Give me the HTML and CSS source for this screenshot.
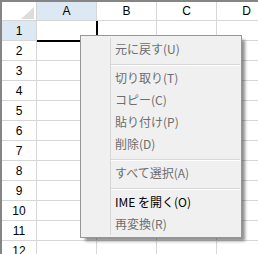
FILE: index.html
```html
<!DOCTYPE html>
<html lang="ja">
<head>
  <meta charset="UTF-8" />
  <title>Sheet context menu</title>
  <link rel="stylesheet" href="styles.css">
</head>
<body>
  <!-- Grid -->
  <div class="sheet">
    <div class="cell corner">
      <svg width="13" height="12" viewBox="0 0 13 12"><polygon points="13,0 13,12 0,12" fill="#dcdcdc"/></svg>
    </div>
    <div class="cell head sel">A</div>
    <div class="cell head">B</div>
    <div class="cell head">C</div>
    <div class="cell head">D</div>

    <div class="cell rowhead sel">1</div><div class="cell"></div><div class="cell"></div><div class="cell"></div><div class="cell"></div>
    <div class="cell rowhead">2</div><div class="cell"></div><div class="cell"></div><div class="cell"></div><div class="cell"></div>
    <div class="cell rowhead">3</div><div class="cell"></div><div class="cell"></div><div class="cell"></div><div class="cell"></div>
    <div class="cell rowhead">4</div><div class="cell"></div><div class="cell"></div><div class="cell"></div><div class="cell"></div>
    <div class="cell rowhead">5</div><div class="cell"></div><div class="cell"></div><div class="cell"></div><div class="cell"></div>
    <div class="cell rowhead">6</div><div class="cell"></div><div class="cell"></div><div class="cell"></div><div class="cell"></div>
    <div class="cell rowhead">7</div><div class="cell"></div><div class="cell"></div><div class="cell"></div><div class="cell"></div>
    <div class="cell rowhead">8</div><div class="cell"></div><div class="cell"></div><div class="cell"></div><div class="cell"></div>
    <div class="cell rowhead">9</div><div class="cell"></div><div class="cell"></div><div class="cell"></div><div class="cell"></div>
    <div class="cell rowhead">10</div><div class="cell"></div><div class="cell"></div><div class="cell"></div><div class="cell"></div>
    <div class="cell rowhead">11</div><div class="cell"></div><div class="cell"></div><div class="cell"></div><div class="cell"></div>
    <div class="cell rowhead">12</div><div class="cell"></div><div class="cell"></div><div class="cell"></div><div class="cell"></div>

    <div class="active"></div>
  </div>

  <!-- Context menu -->
  <div class="menu">
    <div class="menu-list">
      <div class="item off">元に戻す(U)</div>
      <div class="sep"></div>
      <div class="item off">切り取り(T)</div>
      <div class="item off">コピー(C)</div>
      <div class="item off">貼り付け(P)</div>
      <div class="item off">削除(D)</div>
      <div class="sep"></div>
      <div class="item off">すべて選択(A)</div>
      <div class="sep"></div>
      <div class="item">IME を開く(O)</div>
      <div class="item off">再変換(R)</div>
    </div>
  </div>
</body>
</html>
```

FILE: styles.css
```css
html, body {
  margin: 0;
  padding: 0;
  width: 258px;
  height: 254px;
  overflow: hidden;
  background: #fff;
}

body {
  position: relative;
  font-family: "Liberation Sans", Arial, sans-serif;
}

/* Grid */
.sheet {
  position: relative;
  display: grid;
  grid-template-columns: 35px repeat(4, 60px);
  grid-template-rows: 19px;
  grid-auto-rows: 20px;
  width: max-content;
  border-top: 2px solid #858585;
  border-left: 2px solid #858585;
}

.cell {
  box-sizing: border-box;
  border-right: 1px solid #d6d6d6;
  border-bottom: 1px solid #d6d6d6;
  display: flex;
  align-items: center;
  justify-content: center;
  font-size: 12px;
  color: #000;
}

.corner {
  justify-content: flex-end;
  align-items: flex-end;
  padding: 0 2px 1px 0;
}

.corner svg {
  display: block;
}

.sel {
  background: #dce9f5;
}

.active {
  position: absolute;
  left: 35px;
  top: 19px;
  width: 61px;
  height: 21px;
  box-sizing: border-box;
  border-right: 2px solid #000;
  border-bottom: 2px solid #000;
}

/* Context menu */
.menu {
  position: absolute;
  left: 80px;
  top: 35px;
  width: 162px;
  box-sizing: border-box;
  padding: 2px 1px 2px 2px;
  background: #f0f0f0;
  border: 1px solid #979797;
  box-shadow: 4px 4px 3px -1px rgba(0, 0, 0, 0.45);
  font-family: "Noto Sans CJK JP", "Noto Sans", sans-serif;
  font-size: 12px;
}

.menu-list {
  background: linear-gradient(to right, transparent 27px, #d7d7d7 27px, #d7d7d7 28px, transparent 28px);
}

.item {
  height: 22px;
  line-height: 22px;
  padding-left: 32px;
  color: #000;
  white-space: nowrap;
}

.item.off {
  color: #6d6d6d;
}

.sep {
  height: 0;
  margin: 4px 0 1px 28px;
  border-top: 1px solid #d7d7d7;
  border-bottom: 1px solid #fff;
}
```
